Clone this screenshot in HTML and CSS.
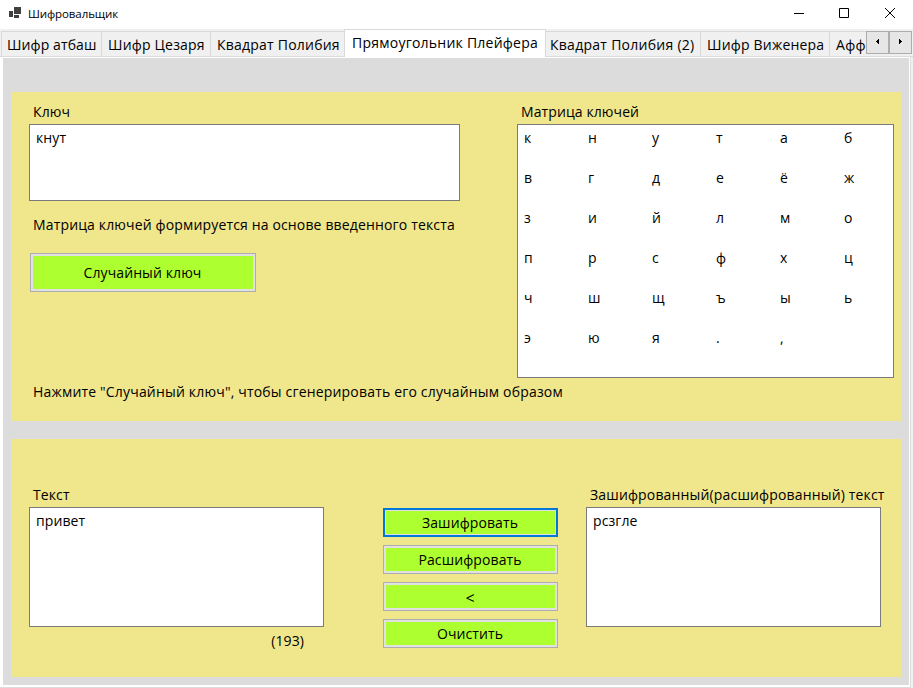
FILE: index.html
```html
<!DOCTYPE html>
<html lang="ru">
<head>
<meta charset="utf-8">
<title>Шифровальщик</title>
<link rel="stylesheet" href="styles.css">
</head>
<body>
<header class="titlebar">
  <svg class="app-icon" width="13" height="12" viewBox="0 0 13 12" shape-rendering="crispEdges"><path fill="#404040" d="M5 0h7v7H5zM0 4h4v6H0zM5 8h5v3H5z"/></svg>
  <span class="title">Шифровальщик</span>
  <svg class="controls" width="104" height="12" viewBox="0 0 104 12" fill="none" stroke="#000"><path d="M1 6.5h10"/><path d="M46.5 1.500h9v9h-9z"/><path d="M92 1l10 10M102 1l-10 10"/></svg>
</header>
<nav class="tabs">
  <div class="tab t1"><span>Шифр атбаш</span></div>
  <div class="tab t2"><span>Шифр Цезаря</span></div>
  <div class="tab t3"><span>Квадрат Полибия</span></div>
  <div class="tab t4 active"><span>Прямоугольник Плейфера</span></div>
  <div class="tab t5"><span>Квадрат Полибия (2)</span></div>
  <div class="tab t6"><span>Шифр Виженера</span></div>
  <div class="tab t7"><span>Афф</span></div>
  <div class="scroll"><svg width="21" height="21" shape-rendering="crispEdges"><path d="M9 9h1V8h1V7h1v5h-1v-1h-1v-1H9z"/></svg></div>
  <div class="scroll"><svg width="21" height="21" shape-rendering="crispEdges"><path d="M9 7h1v1h1v1h1v1h-1v1h-1v1H9z"/></svg></div>
</nav>
<div class="frame">
<main class="page">
  <section class="panel keys">
    <div class="key-column">
      <label class="label">Ключ</label>
      <div class="box key-box">кнут</div>
      <p class="label note">Матрица ключей формируется на основе введенного текста</p>
      <button class="btn random">Случайный ключ</button>
      <p class="label hint">Нажмите "Случайный ключ", чтобы сгенерировать его случайным образом</p>
    </div>
    <div class="matrix-column">
      <label class="label">Матрица ключей</label>
      <div class="box matrix">
        <span>к</span><span>н</span><span>у</span><span>т</span><span>а</span><span>б</span>
        <span>в</span><span>г</span><span>д</span><span>е</span><span>ё</span><span>ж</span>
        <span>з</span><span>и</span><span>й</span><span>л</span><span>м</span><span>о</span>
        <span>п</span><span>р</span><span>с</span><span>ф</span><span>х</span><span>ц</span>
        <span>ч</span><span>ш</span><span>щ</span><span>ъ</span><span>ы</span><span>ь</span>
        <span>э</span><span>ю</span><span>я</span><span>.</span><span>,</span>
      </div>
    </div>
  </section>
  <section class="panel texts">
    <div class="source">
      <label class="label">Текст</label>
      <div class="box text-box">привет</div>
      <div class="count">(193)</div>
    </div>
    <div class="actions">
      <button class="btn focused">Зашифровать</button>
      <button class="btn">Расшифровать</button>
      <button class="btn less">&lt;</button>
      <button class="btn">Очистить</button>
    </div>
    <div class="result">
      <label class="label result-label">Зашифрованный(расшифрованный) текст</label>
      <div class="box text-box">рсзгле</div>
    </div>
  </section>
</main>
</div>
</body>
</html>
```
FILE: styles.css
```css
* { box-sizing: border-box; }
body {
  margin: 0;
  width: 913px;
  height: 688px;
  overflow: hidden;
  background: #f0f0f0;
  color: #000;
  font: 14px/20px "Open Sans", "Noto Sans", sans-serif;
  letter-spacing: 0.1px;
}
.titlebar {
  display: flex;
  align-items: center;
  height: 29px;
  padding: 0 16px 3px 9px;
  background: #fff;
}
.title { margin-left: 6px; font-size: 11.5px; line-height: 16px; flex: 1; letter-spacing: -0.1px; padding-top: 2px; }
.tabs { display: flex; height: 28px; padding: 2px 0 0 1px; border-bottom: 1px solid #dcdcdc; }
.tab {
  flex-shrink: 0;
  height: 25px;
  border: 1px solid #d9d9d9;
  border-width: 1px 0 0 1px;
  white-space: nowrap;
  overflow: hidden;
  padding: 3px 0 0 5px;
}
.t1 { width: 100px; }
.t2 { width: 109px; padding-left: 6px; letter-spacing: 0.2px; }
.t3 { width: 134px; padding-left: 6px; letter-spacing: 0.22px; }
.t4 { width: 202px; padding-left: 7px; letter-spacing: 0.24px; }
.t5 { width: 154px; padding-left: 4px; letter-spacing: 0.27px; border-left: 0; }
.t6 { width: 129px; padding-left: 6px; letter-spacing: 0.2px; }
.t7 { width: 37px; padding-left: 6px; letter-spacing: 0.3px; }
.tab.active { height: 28px; margin-top: -2px; background: #fff; border-right-width: 1px; }
.scroll { width: 23px; height: 23px; border: 1px solid #adadad; background: #e6e6e6; }
.scroll svg { display: block; }
.frame {
  height: 631px;
  width: 911px;
  padding: 1px 1px 2px 3px;
  background: #fff;
  border-right: 1px solid #dcdcdc;
  border-bottom: 1px solid #dcdcdc;
}
.page { height: 627px; background: #dcdcdc; padding: 34px 8px 0; }
.panel { display: flex; background: #f0e68c; width: 890px; }
.keys { height: 329px; padding: 10px 7px 0 18px; }
.key-column { width: 488px; flex-shrink: 0; }
.label { display: block; height: 22px; margin: 0; padding-left: 4px; white-space: nowrap; }
.box { border: 1px solid #7a7a7a; background: #fff; padding: 3px 6px; }
.key-box { width: 431px; height: 77px; }
.note { margin-top: 14px; letter-spacing: 0.15px; }
.hint { letter-spacing: 0.18px; }
.result-label { letter-spacing: 0.16px; }
.btn {
  display: block;
  width: 175px;
  height: 29px;
  margin: 0;
  padding: 0 1px 0 0;
  border: 1px solid #adadad;
  background: #adff2f;
  box-shadow: inset 0 0 0 2px #e1e1e1;
  color: #000;
  font: inherit;
  letter-spacing: inherit;
}
.btn.focused { border: 2px solid #0078d7; box-shadow: inset 0 0 0 1px #e1e1e1; }
.btn.less { padding-top: 3px; font-size: 16px; }
.btn.random { width: 226px; height: 39px; margin: 16px 0 90px 1px; }
.matrix-column { width: 377px; }
.matrix {
  display: grid;
  grid-template-columns: repeat(6, 64px);
  grid-auto-rows: 40px;
  height: 254px;
}
.texts { height: 238px; margin-top: 18px; padding: 46px 0 0 18px; }
.source { width: 354px; flex-shrink: 0; }
.text-box { width: 295px; height: 120px; }
.count { width: 275px; text-align: right; margin-top: 4px; }
.actions { display: flex; flex-direction: column; flex-shrink: 0; gap: 8px; width: 203px; padding-top: 23px; }
```
